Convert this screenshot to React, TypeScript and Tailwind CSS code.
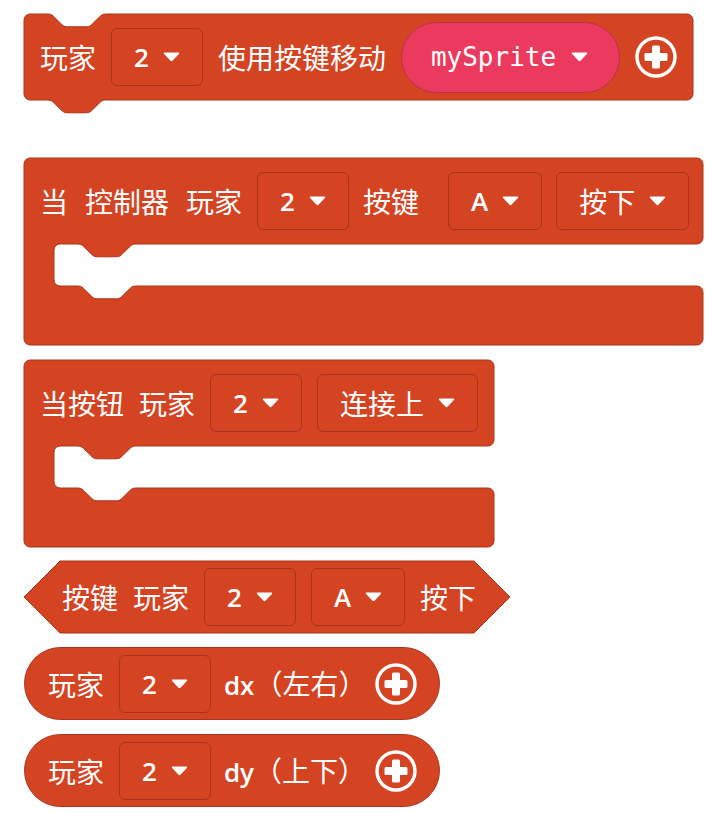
import React from 'react'

const FILL = '#d44322'
const EDGE = '#a9361b'

// pxt-style notch at zoom 1.6
const NOTCH_LR =
  'c 3.2,0 4.8,1.6 6.4,3.2 l 6.4,6.4 c 1.6,1.6 3.2,3.2 6.4,3.2 h 19.2 c 3.2,0 4.8,-1.6 6.4,-3.2 l 6.4,-6.4 c 1.6,-1.6 3.2,-3.2 6.4,-3.2'
const NOTCH_RL =
  'c -3.2,0 -4.8,1.6 -6.4,3.2 l -6.4,6.4 c -1.6,1.6 -3.2,3.2 -6.4,3.2 h -19.2 c -3.2,0 -4.8,-1.6 -6.4,-3.2 l -6.4,-6.4 c -1.6,-1.6 -3.2,-3.2 -6.4,-3.2'

function stackPath(w: number, h: number) {
  return `M 0,6 a 6,6 0 0 1 6,-6 H 24 ${NOTCH_LR} H ${w - 6} a 6,6 0 0 1 6,6 V ${h - 6} a 6,6 0 0 1 -6,6 H 81.6 ${NOTCH_RL} H 6 a 6,6 0 0 1 -6,-6 Z`
}

function cPath(w: number) {
  const y1 = 86
  const y2 = 128
  const h = 187
  const inner = 30
  return `M 0,6 a 6,6 0 0 1 6,-6 H ${w - 6} a 6,6 0 0 1 6,6 V ${y1 - 6} a 6,6 0 0 1 -6,6 H ${inner + 24 + 57.6} ${NOTCH_RL} H ${inner + 6} a 6,6 0 0 0 -6,6 V ${y2 - 6} a 6,6 0 0 0 6,6 H ${inner + 24} ${NOTCH_LR} H ${w - 6} a 6,6 0 0 1 6,6 V ${h - 6} a 6,6 0 0 1 -6,6 H 6 a 6,6 0 0 1 -6,-6 Z`
}

function Shape({ d, w, h }: { d: string; w: number; h: number }) {
  return (
    <svg className="absolute left-0 top-0 overflow-visible" width={w} height={h}>
      <path d={d} fill={FILL} stroke={EDGE} strokeWidth={1} />
    </svg>
  )
}

function Caret() {
  return (
    <svg width="17" height="10" viewBox="0 0 17 10" className="shrink-0">
      <path d="M1.8,0.5 H15.2 Q17,0.5 15.9,1.9 L9.7,8.6 Q8.5,9.8 7.3,8.6 L1.1,1.9 Q0,0.5 1.8,0.5 Z" fill="white" />
    </svg>
  )
}

function PlusIcon() {
  return (
    <svg width="42" height="42" viewBox="0 0 42 42" className="shrink-0">
      <circle cx="21" cy="21" r="19" fill="none" stroke="white" strokeWidth="3.4" />
      <rect x="17" y="9.5" width="8" height="23" rx="1.5" fill="white" />
      <rect x="9.5" y="17" width="23" height="8" rx="1.5" fill="white" />
    </svg>
  )
}

function Label({ children, className = '' }: { children: React.ReactNode; className?: string }) {
  return (
    <span className={`whitespace-nowrap text-[28px] leading-none text-white font-['Noto_Sans_CJK_SC',sans-serif] ${className}`}>
      {children}
    </span>
  )
}

function Dropdown({ value, latin = false, className = '' }: { value: string; latin?: boolean; className?: string }) {
  return (
    <div
      className={`flex h-[58px] shrink-0 items-center gap-[14px] rounded-[6px] border border-[#a6341a] pl-[22px] pr-[22px] ${className}`}
    >
      {latin ? (
        <span className="text-[26px] leading-none font-semibold text-white font-['Open_Sans','Noto_Sans_CJK_SC',sans-serif]">
          {value}
        </span>
      ) : (
        <Label>{value}</Label>
      )}
      <Caret />
    </div>
  )
}

function SpritePill() {
  return (
    <div className="flex h-[71px] w-[219px] shrink-0 items-center gap-[15px] rounded-full border border-[#b8304f] bg-[#eb3a5d] pl-[29px]">
      <span className="text-[26px] leading-none text-white font-['DejaVu_Sans_Mono',monospace]">mySprite</span>
      <Caret />
    </div>
  )
}

function Reporter({ axis, hint }: { axis: string; hint: string }) {
  return (
    <div className="flex h-[73px] w-[416px] items-center rounded-full border border-[#a9361b] bg-[#d44322] pl-[23px]">
      <Label>玩家</Label>
      <Dropdown value="2" latin className="ml-[15px]" />
      <Label className="ml-[13px]">
        <span className="text-[26px] font-semibold font-['Open_Sans',sans-serif]">{axis}</span>
        {hint}
      </Label>
      <div className="ml-[9px]">
        <PlusIcon />
      </div>
    </div>
  )
}

export default function App() {
  return (
    <div className="h-[813px] w-[722px] overflow-hidden bg-white pl-[24px] pt-[14px]">
      <div className="flex flex-col">
        {/* move with buttons */}
        <div className="relative h-[86px] w-[669px]">
          <Shape d={stackPath(669, 86)} w={669} h={86} />
          <div className="relative flex h-[86px] items-center gap-[15px] pl-[16px]">
            <Label>玩家</Label>
            <Dropdown value="2" latin />
            <Label>使用按键移动</Label>
            <SpritePill />
            <PlusIcon />
          </div>
        </div>

        {/* on controller button */}
        <div className="relative mt-[58px] h-[187px] w-[679px]">
          <Shape d={cPath(679)} w={679} h={187} />
          <div className="relative flex h-[86px] items-center pl-[16px]">
            <Label>当</Label>
            <Label className="ml-[17px]">控制器</Label>
            <Label className="ml-[17px]">玩家</Label>
            <Dropdown value="2" latin className="ml-[15px]" />
            <Label className="ml-[14px]">按键</Label>
            <Dropdown value="A" latin className="ml-[29px]" />
            <Dropdown value="按下" className="ml-[14px]" />
          </div>
        </div>

        {/* on connect */}
        <div className="relative mt-[15px] h-[187px] w-[470px]">
          <Shape d={cPath(470)} w={470} h={187} />
          <div className="relative flex h-[86px] items-center gap-[15px] pl-[16px]">
            <Label>当按钮</Label>
            <Label>玩家</Label>
            <Dropdown value="2" latin />
            <Dropdown value="连接上" />
          </div>
        </div>

        {/* is pressed */}
        <div className="relative mt-[14px] h-[72px] w-[486px]">
          <Shape d="M 0,36 L 36,0 H 450 L 486,36 L 450,72 H 36 Z" w={486} h={72} />
          <div className="relative flex h-[72px] items-center gap-[15px] pl-[38px]">
            <Label>按键</Label>
            <Label>玩家</Label>
            <Dropdown value="2" latin />
            <Dropdown value="A" latin />
            <Label>按下</Label>
          </div>
        </div>

        <div className="mt-[14px]">
          <Reporter axis="dx" hint="（左右）" />
        </div>
        <div className="mt-[14px]">
          <Reporter axis="dy" hint="（上下）" />
        </div>
      </div>
    </div>
  )
}
